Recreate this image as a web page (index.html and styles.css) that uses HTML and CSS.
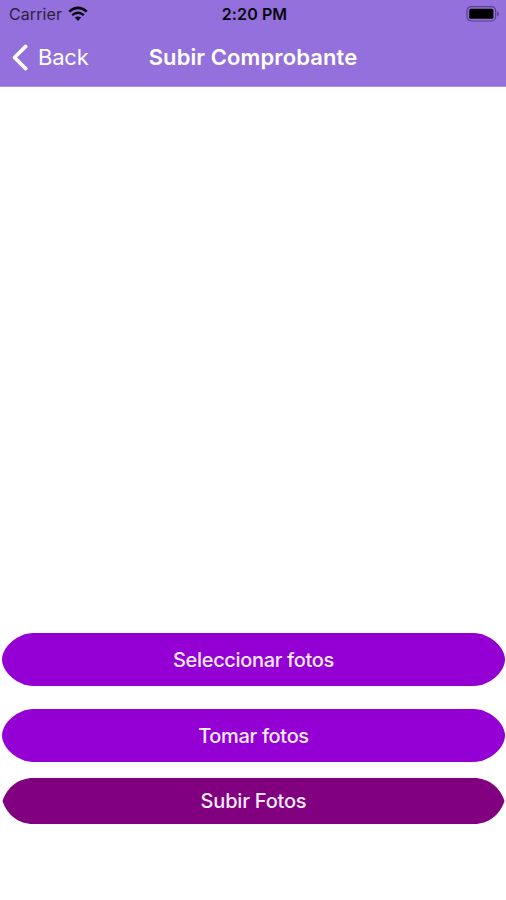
FILE: index.html
```
<!DOCTYPE html>
<html lang="es">
<head>
<meta charset="utf-8">
<meta name="viewport" content="width=device-width, initial-scale=1">
<title>Subir Comprobante</title>
<link rel="stylesheet" href="styles.css">
</head>
<body>
<div class="screen">
  <header class="header">
    <div class="status">
      <div class="network">
        <span class="carrier">Carrier</span>
        <svg class="wifi" width="20" height="16" viewBox="0 0 20 16" fill="none" stroke="#08040f" stroke-width="2.5">
          <path d="M1.2 5.6Q10-1.8 18.8 5.6"/>
          <path d="M4.2 9.1Q10 4.3 15.8 9.1"/>
          <path d="M6.8 11.6Q10 9.2 13.2 11.6L10 15Z" fill="#08040f" stroke="none"/>
        </svg>
      </div>
      <span class="time">2:20 PM</span>
      <svg class="battery" width="34" height="16" viewBox="0 0 34 16">
        <rect x="1" y=".6" width="28.6" height="14.4" rx="4.2" fill="none" stroke="#58408a" stroke-width="1.2"/>
        <rect x="3.2" y="2.8" width="24.2" height="10" rx="1.6" fill="#000"/>
        <path d="M31.2 5.3Q33 6.3 33 7.8T31.2 10.3Z" fill="#58408a"/>
      </svg>
    </div>
    <nav class="navbar">
      <a class="back">
        <svg width="16" height="27" viewBox="0 0 16 27" fill="none" stroke="#fff" stroke-width="3.6" stroke-linecap="round" stroke-linejoin="round"><path d="M13.7 2.4L2.5 13.5L13.7 24.6"/></svg>
        <span class="back-label">Back</span>
      </a>
      <h1 class="title">Subir Comprobante</h1>
    </nav>
  </header>
  <main class="preview"></main>
  <footer class="actions">
    <button class="button select"><span>Seleccionar fotos</span></button>
    <button class="button take"><span>Tomar fotos</span></button>
    <button class="button upload"><span>Subir Fotos</span></button>
  </footer>
</div>
</body>
</html>
```
FILE: styles.css
```
* { box-sizing: border-box; }
body {
  margin: 0;
  background: #fff;
  font-family: Inter, "Liberation Sans", sans-serif;
}
.screen {
  display: flex;
  flex-direction: column;
  width: 506px;
  height: 900px;
}
.header {
  height: 87px;
  background: #9370db;
  border-bottom: 1px solid #a991e0;
}
.status {
  display: grid;
  grid-template-columns: 1fr auto 1fr;
  align-items: center;
  height: 29px;
  padding: 0 6px 1px 9px;
  color: #08040f;
}
.network { display: flex; align-items: center; gap: 6px; }
.carrier { font-size: 16px; letter-spacing: .1px; color: #2b2140; }
.wifi { margin-top: -1px; }
.time { font-size: 16px; font-weight: 600; letter-spacing: .1px; }
.battery { justify-self: end; margin-top: -1px; }
.navbar {
  display: grid;
  grid-template-columns: 1fr auto 1fr;
  align-items: center;
  height: 57px;
  padding: 0 12px;
  color: #fff;
}
.back { display: flex; align-items: center; gap: 10px; }
.back-label { padding-bottom: 2px; font-size: 22px; letter-spacing: -.2px; }
.title { margin: 0; padding-bottom: 2px; font-size: 22px; font-weight: 600; letter-spacing: .1px; }
.preview { flex: 1; }
.actions {
  display: flex;
  flex-direction: column;
  padding: 0 1px 76px 2px;
}
.button {
  width: 503px;
  padding: 0;
  border: 0;
  color: #f8eaff;
  font: 500 20px Inter, "Liberation Sans", sans-serif;
  letter-spacing: -.34px;
}
.select, .take {
  height: 53px;
  background: #9400d3;
  clip-path: path("M31 0H472C487 0 503 14 503 26.5C503 39 487 53 472 53H31C16 53 0 39 0 26.5C0 14 16 0 31 0Z");
}
.select { margin-bottom: 23px; }
.take { margin-bottom: 16px; }
.upload {
  height: 46px;
  background: #800080;
  letter-spacing: -.2px;
  clip-path: path("M31 0H472C486 0 498 9 502.5 23C498 37 486 46 472 46H31C17 46 5 37 .5 23C5 9 17 0 31 0Z");
}
```
